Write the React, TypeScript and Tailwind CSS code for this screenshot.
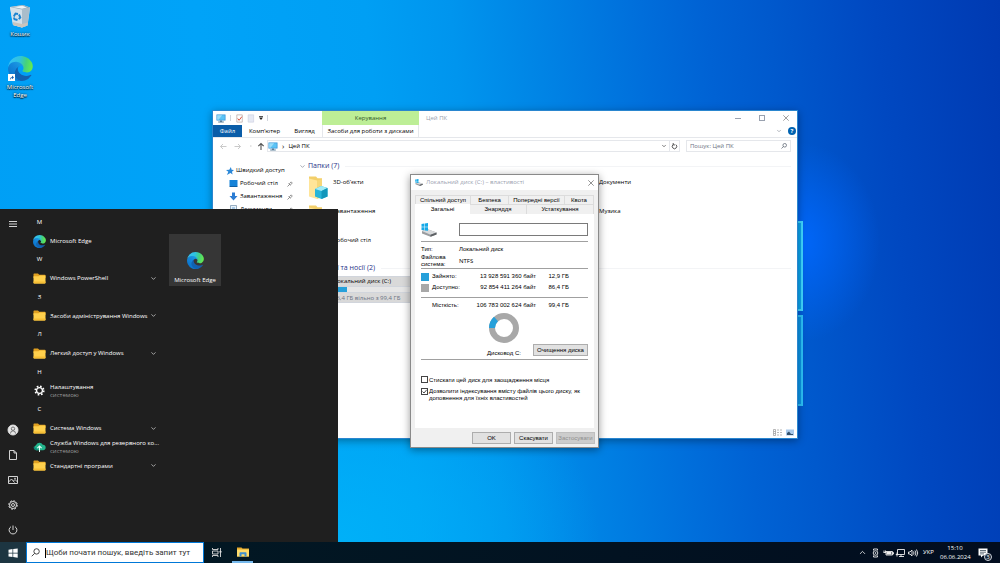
import { ReactNode, useId, useState } from "react";
import { ChevronDown, ChevronUp } from "lucide-react";

const UI_FONT = "font-['Open_Sans','Noto_Sans',sans-serif]";
const DIALOG_FONT = "font-['Liberation_Sans',Arial,sans-serif]";

function EdgeLogo({ className }: { className?: string }) {
  const id = useId();
  return (
    <svg viewBox="0 0 258 259" className={className} aria-hidden="true">
      <defs>
        <linearGradient id={`${id}a`} x1="63" y1="177" x2="241" y2="177" gradientUnits="userSpaceOnUse">
          <stop offset="0" stopColor="#0f62b4" />
          <stop offset="1" stopColor="#1660ab" />
        </linearGradient>
        <linearGradient id={`${id}b`} x1="157" y1="100" x2="46" y2="221" gradientUnits="userSpaceOnUse">
          <stop offset="0" stopColor="#1b9de2" />
          <stop offset="0.4" stopColor="#1588dc" />
          <stop offset="1" stopColor="#0b74cc" />
        </linearGradient>
        <linearGradient id={`${id}c`} x1="20" y1="60" x2="250" y2="110" gradientUnits="userSpaceOnUse">
          <stop offset="0" stopColor="#35c1f1" />
          <stop offset="0.4" stopColor="#2fc3df" />
          <stop offset="0.7" stopColor="#45d27b" />
          <stop offset="1" stopColor="#66eb4e" />
        </linearGradient>
      </defs>
      <path
        fill={`url(#${id}a)`}
        d="M235.68 195.46a93.73 93.73 0 01-10.54 4.71 101.87 101.87 0 01-35.9 6.46c-47.32 0-88.54-32.55-88.54-74.32A31.48 31.48 0 01117.13 105c-42.8 1.8-53.8 46.4-53.8 72.53 0 73.88 68.09 81.37 82.76 81.37 7.91 0 19.84-2.3 27-4.56l1.31-.44a128.34 128.34 0 0066.6-52.8 4 4 0 00-5.32-5.64z"
      />
      <path
        fill={`url(#${id}b)`}
        d="M105.73 246.42A79.2 79.2 0 0183 225.08 80.72 80.72 0 01117.13 105c2.2-1.1 6-3 11.03-2.9a31.5 31.5 0 0125.41 12.8 31.1 31.1 0 016.2 18.2c0-.2 24.5-79.6-80-79.6-43.9 0-80 41.66-80 78.21a130.15 130.15 0 0012.11 56 128 128 0 00156.38 67.11 75.55 75.55 0 01-62.78-10z"
      />
      <path
        fill={`url(#${id}c)`}
        d="M152.33 148.86c-.81 1.05-3.3 2.5-3.3 5.66 0 2.61 1.7 5.12 4.72 7.23 14.38 10 41.49 8.68 41.56 8.68a59.56 59.56 0 0030.27-8.35 61.38 61.38 0 0030.43-52.88c.26-22.41-8-37.31-11.34-43.91-21.19-41.45-66.93-65.29-116.67-65.29a128 128 0 00-128 126.2c.48-36.54 36.8-66.05 80-66.05 3.5 0 23.46.34 42 10.07 16.34 8.58 24.9 18.94 30.85 29.21 6.18 10.67 7.28 24.15 7.28 29.52s-2.74 13.33-7.8 19.91z"
      />
    </svg>
  );
}

function RecycleBin() {
  return (
    <svg viewBox="0 0 22 24" className="h-6 w-[22px]" aria-hidden="true">
      <path d="M1 3l13-2 7 2.500-2.500 18L13 23.500 4 21z" fill="#d6e3ec" />
      <path d="M1 3l12 2.500L13 23.500 4 21z" fill="#d3e0e9" />
      <path d="M13 5.500l8-2-2.500 18L13 23.500z" fill="#a9bdcb" />
      <path d="M1 3l13-2 7 2.500-8 2z" fill="#8fa9b8" />
      <path d="M4 3l9.500-1.200L18 3.500l-5 1.200z" fill="#eef3f6" />
      <path d="M4 18l9 2 5.800-1.500-.4 3L13 23.500 4 21z" fill="#c9c4bd" />
      <g fill="none" stroke="#1c83cf" strokeWidth="1.900">
        <path d="M4.800 12.500l1.700-3 2.500.5" />
        <path d="M10 10.500l1.300 3-1.500 1.600" />
        <path d="M8.500 16l-3-.8-.7-1.700" />
      </g>
    </svg>
  );
}

function MenuFolder() {
  return (
    <svg viewBox="0 0 13 11" className="h-[11px] w-[13px]" aria-hidden="true">
      <path d="M.5 1.200Q.5.500 1.200.500H5l1.200 1.200h5.600q.7 0 .7.700V5H.5z" fill="#e0a021" />
      <path d="M.5 3.200h5L6.500 2.400h6v7.300q0 .8-.8.8H1.300q-.8 0-.8-.8z" fill="#ffd04c" />
      <path d="M.5 8.500h12v1.200q0 .8-.8.8H1.300q-.8 0-.8-.8z" fill="#f6bd35" />
    </svg>
  );
}

function CogIcon() {
  return (
    <svg viewBox="0 0 12 12" className="size-[11px]" aria-hidden="true">
      <circle cx="6" cy="6" r="4.700" fill="none" stroke="#fff" strokeWidth="1.700" strokeDasharray="1.850 1.840" />
      <circle cx="6" cy="6" r="3.200" fill="none" stroke="#fff" strokeWidth="1.400" />
    </svg>
  );
}

function BackupIcon() {
  return (
    <svg viewBox="0 0 14 12" className="h-3 w-[14px]" aria-hidden="true">
      <path d="M3.500 9.500A2.900 2.900 0 013.200 4 4 4 0 0110.500 3.500 3 3 0 0110.800 9.500z" fill="#23b48c" />
      <path d="M3.500 9.500A2.900 2.900 0 011 5.500l5 4z" fill="#0f8a78" />
      <path d="M7 11.500V5M4.700 7.200L7 5l2.300 2.200" fill="none" stroke="#e8fff8" strokeWidth="1.100" />
    </svg>
  );
}

function PcIcon({ className }: { className?: string }) {
  return (
    <svg viewBox="0 0 10 9" className={className} aria-hidden="true">
      <path d="M.5.500h9v6h-9z" fill="#2f8fd6" />
      <path d="M1.200 1.200h7.600v4.600H1.200z" fill="#5cc3f5" />
      <path d="M1.200 1.200h5L2.500 5.800H1.200z" fill="#9adcf9" />
      <path d="M4 6.500h2v1H4zM2.200 7.500h5.600v1H2.200z" fill="#5b7f99" />
    </svg>
  );
}

function DriveIcon({ className }: { className?: string }) {
  return (
    <svg viewBox="0 0 16 14" className={className} aria-hidden="true">
      <path d="M1 8l5-2 9.500 3.500v2l-6 2.300L1 10.500z" fill="#9a9da0" />
      <path d="M1 8l5-2 9.500 3.500-6 2.200z" fill="#d8dadc" />
      <path d="M9.500 11.700l6-2.200v2l-6 2.300z" fill="#5d6164" />
      <path d="M.5 1L3.300.600v3.200H.5zM3.800.500L7 0v3.800H3.800zM.5 4.300h2.800v3L.5 6.900zM3.800 4.300H7v3.500l-3.200-.4z" fill="#15a9e8" />
    </svg>
  );
}

function FolderIcon({ kind }: { kind?: string }) {
  return (
    <svg viewBox="0 0 24 25" className="h-[25px] w-6 shrink-0" aria-hidden="true">
      <path d="M2 1.500h7l1.500 1.800H15V21H2z" fill="#f3cf6a" />
      <path d="M2 3.500l8 2V24l-8-2.500z" fill="#ffe599" />
      <path d="M10 5.500l5-1.200V22L10 24z" fill="#f7d778" />
      {kind === "cube" && (
        <>
          <path d="M8 14l6-3 6.500 2v8.500l-6 2.500L8 21.500z" fill="#29b5d8" />
          <path d="M8 14l6-3 6.500 2-6 3z" fill="#a3ecf5" />
          <path d="M14.500 16l6-3v8.500l-6 2.500z" fill="#1296bb" />
        </>
      )}
    </svg>
  );
}

function SearchGlyph({ className }: { className?: string }) {
  return (
    <svg viewBox="0 0 10 10" className={className} fill="none" stroke="currentColor" aria-hidden="true">
      <circle cx="6.200" cy="3.800" r="3" />
      <path d="M4 6L.8 9.200" />
    </svg>
  );
}

function DesktopIcon({ label, children }: { label: string; children: ReactNode }) {
  return (
    <button className="flex w-[38px] flex-col items-center gap-[2px] text-center text-[6px] leading-[8px] text-white [text-shadow:0_1px_1px_#000,0_0_2px_#000]">
      <span className="relative">{children}</span>
      {label}
    </button>
  );
}

type MenuRow = { letter?: string; label?: string; icon?: "edge" | "folder" | "cog" | "backup"; note?: string };

const MENU_ROWS: MenuRow[] = [
  { letter: "M" },
  { label: "Microsoft Edge", icon: "edge" },
  { letter: "W" },
  { label: "Windows PowerShell", icon: "folder" },
  { letter: "З" },
  { label: "Засоби адміністрування Windows", icon: "folder" },
  { letter: "Л" },
  { label: "Легкий доступ у Windows", icon: "folder" },
  { letter: "Н" },
  { label: "Налаштування", icon: "cog", note: "системою" },
  { letter: "С" },
  { label: "Система Windows", icon: "folder" },
  { label: "Служба Windows для резервного ко...", icon: "backup", note: "системою" },
  { label: "Стандартні програми", icon: "folder" },
];

function MenuIcon({ icon }: { icon: MenuRow["icon"] }) {
  if (icon === "edge") return <EdgeLogo className="size-[13px]" />;
  if (icon === "cog") return <CogIcon />;
  if (icon === "backup") return <BackupIcon />;
  return <MenuFolder />;
}

function RailButton({ label, children }: { label: string; children: ReactNode }) {
  return (
    <button aria-label={label} className="flex h-[25px] w-full items-center justify-center">
      <svg viewBox="0 0 12 12" className="size-3" fill="none" stroke="#e6e6e6" strokeWidth="0.900">
        {children}
      </svg>
    </button>
  );
}

function StartMenu() {
  return (
    <div className="absolute bottom-0 left-0 z-30 flex h-[333px] w-[338px] bg-[#1f1f1f] text-[6px] text-white">
      <nav className="flex w-[26px] flex-col pt-[2px]">
        <RailButton label="Меню">
          <path d="M2 3.500h8M2 6h8M2 8.500h8" />
        </RailButton>
        <div className="flex-1" />
        <RailButton label="Користувач">
          <circle cx="6" cy="6" r="5" fill="#e4e4e4" />
          <circle cx="6" cy="4.700" r="1.700" stroke="#666" />
          <path d="M3.500 9.500Q3.500 6.800 6 6.800T8.500 9.500" stroke="#666" />
        </RailButton>
        <RailButton label="Документи">
          <path d="M2.500 1.500h4.500L9.500 4v6.500h-7zM7 1.500V4h2.500" />
        </RailButton>
        <RailButton label="Зображення">
          <path d="M1.500 2.500h9v7h-9zM1.500 8L4.500 5l3 3.500M6.500 7l1.500-1.500 2.500 2.500" />
          <circle cx="8" cy="4.300" r=".4" />
        </RailButton>
        <RailButton label="Параметри">
          <circle cx="6" cy="6" r="4.300" strokeDasharray="1.900 1.470" />
          <circle cx="6" cy="6" r="3.500" />
          <circle cx="6" cy="6" r="1.500" />
        </RailButton>
        <RailButton label="Живлення">
          <path d="M6 1.500V6M4 2.700a3.900 3.900 0 104 0" />
        </RailButton>
      </nav>

      <ul className="mt-1 grid h-[262px] w-[132px] auto-rows-fr pl-[7px]">
        {MENU_ROWS.map((row) => (
          <li key={row.letter ?? row.label} className="flex items-center">
            {row.letter ? (
              <span className="w-[13px] text-center">{row.letter}</span>
            ) : (
              <button className="flex w-full items-center text-left">
                <span className="flex w-[13px] shrink-0 justify-center">
                  <MenuIcon icon={row.icon} />
                </span>
                <span className="ml-1 flex-1 leading-[8px] whitespace-nowrap">
                  {row.label}
                  {row.note && <span className="block text-[#9a9a9a]">{row.note}</span>}
                </span>
                {row.icon === "folder" && <ChevronDown className="mr-[2px] size-[7px]" strokeWidth={2} />}
              </button>
            )}
          </li>
        ))}
      </ul>

      <button className="mt-[25px] ml-[11px] flex h-[52px] w-[52px] flex-col items-center justify-end bg-[#363636] pb-[2px]">
        <EdgeLogo className="mb-[7px] size-[17px]" />
        <span className="leading-[8px] whitespace-nowrap">Microsoft Edge</span>
      </button>
    </div>
  );
}

function SidebarLink({ label, pinned = true, children }: { label: string; pinned?: boolean; children: ReactNode }) {
  return (
    <a href="#" className={`flex h-[13px] items-center ${pinned ? "pl-[3px]" : ""}`}>
      <svg viewBox="0 0 9 9" className={pinned ? "mr-[2px] size-[9px]" : "mr-[2px] size-2"} aria-hidden="true">
        {children}
      </svg>
      <span className="flex-1 whitespace-nowrap">{label}</span>
      {pinned && (
        <svg viewBox="0 0 6 6" className="size-[6px]" stroke="#777" fill="none" strokeWidth="0.800" aria-hidden="true">
          <path d="M.5 5.500L2.500 3.500M1.500 2.500l2 2M2.200 2.800L4.200.900 5.300 2 3.300 4" />
        </svg>
      )}
    </a>
  );
}

function FolderTile({ label, className, kind }: { label: string; className?: string; kind?: string }) {
  return (
    <button className={`flex h-[29px] items-start gap-[2px] pl-2 text-left ${className ?? ""}`}>
      <FolderIcon kind={kind} />
      <span className="mt-[3px]">{label}</span>
    </button>
  );
}

function SectionHeading({ children }: { children: ReactNode }) {
  return (
    <h2 className="flex items-center gap-[2px] text-[7px] leading-[10px] text-[#1e3287]">
      <ChevronDown className="size-[7px] text-gray-500" />
      {children}
      <span className="ml-1 h-px flex-1 bg-gray-100" />
    </h2>
  );
}

function ExplorerWindow() {
  return (
    <section className="absolute top-[110px] left-[212px] z-10 flex h-[329px] w-[586px] flex-col border border-[#2a86cf] bg-white text-[6px] text-black shadow-[0_2px_8px_rgba(0,0,0,0.35)]">
      <header className="flex h-[14px] items-stretch">
        <div className="flex w-[109px] items-center gap-1 pl-[3px]">
          <PcIcon className="h-[9px] w-[10px]" />
          <span className="h-[6px] w-px bg-gray-300" />
          <svg viewBox="0 0 22 9" className="h-[9px] w-[20px]" fill="none" aria-hidden="true">
            <path d="M2 .500h6v8H2z" fill="#fff" stroke="#b9a8a4" strokeWidth=".8" />
            <path d="M3 4.500L4.500 6.500 7.500 2.500" stroke="#d8432e" />
            <path d="M14.500.500h6v8h-6z" fill="#e6e9f4" stroke="#cfd3e2" strokeWidth=".8" />
          </svg>
          <svg viewBox="0 0 5 5" className="size-1" fill="#222" aria-hidden="true">
            <path d="M0 0h5v1H0zM0 2h5L2.500 5z" />
          </svg>
          <span className="h-[6px] w-px bg-gray-300" />
        </div>
        <div className="flex w-[97px] items-center justify-center bg-[#bdee96] text-[#33592a]">Керування</div>
        <span className="flex flex-1 items-center pl-[7px] text-gray-400">Цей ПК</span>
        <div className="flex items-center gap-[18px] pr-[8px]">
          <button aria-label="Згорнути" className="h-px w-[6px] bg-gray-400" />
          <button aria-label="Розгорнути" className="size-[6px] border border-gray-400" />
          <button aria-label="Закрити">
            <svg viewBox="0 0 6 6" className="size-[6px]" stroke="#888" strokeWidth="0.800">
              <path d="M.3.300l5.400 5.400M5.700.300L.3 5.700" />
            </svg>
          </button>
        </div>
      </header>

      <div className="flex h-[13px] items-stretch border-b border-gray-200">
        <button className="w-[29px] bg-[#0a5da8] text-white">Файл</button>
        <button className="w-[45px]">Комп’ютер</button>
        <button className="w-[35px]">Вигляд</button>
        <button className="w-[97px] border-x border-gray-200 whitespace-nowrap">Засоби для роботи з дисками</button>
        <div className="flex flex-1 items-center justify-end gap-[6px] pr-[1px]">
          <ChevronDown className="size-[6px] text-gray-500" />
          <button className="size-[8px] rounded-full bg-[#0063b1] text-[6px] leading-[8px] font-bold text-white">?</button>
        </div>
      </div>

      <div className="mt-px flex h-[14px] items-center pr-[6px]">
        <svg viewBox="0 0 54 9" className="h-[9px] w-[54px]" fill="none" stroke="#c4c4c4" strokeWidth="0.900" aria-hidden="true">
          <path d="M13.500 4.500h-6M10 2L7.500 4.500 10 7M21.500 4.500h6M25 2l2.500 2.500L25 7M37 4h1.500" />
          <path d="M48 8V1.500M45.300 4.200L48 1.500l2.700 2.700" stroke="#555" strokeWidth="1.100" />
        </svg>
        <div className="flex h-[12px] flex-1 items-center border border-gray-200">
          <PcIcon className="h-[9px] w-[10px]" />
          <span className="mx-1 text-[8px] leading-[8px]">›</span>
          <span className="flex-1">Цей ПК</span>
          <ChevronDown className="mr-[2px] size-[6px]" />
          <span className="h-full w-px bg-gray-200" />
          <svg viewBox="0 0 8 8" className="mx-[1px] size-[7px]" fill="none" stroke="#444" aria-hidden="true">
            <path d="M5.500 1.800A2.600 2.600 0 112.500 1.800M2.500 0v2.200h2" />
          </svg>
        </div>
        <label className="ml-[6px] flex h-[12px] w-[105px] items-center border border-gray-200 px-[3px]">
          <input aria-label="Пошук" placeholder="Пошук: Цей ПК" className="min-w-0 flex-1 outline-none placeholder:text-gray-500" />
          <SearchGlyph className="size-[6px] text-gray-700" />
        </label>
      </div>

      <div className="flex flex-1 overflow-hidden">
        <aside className="w-[86px] pt-[11px] pr-[6px] pl-[13px]">
          <SidebarLink label="Швидкий доступ" pinned={false}>
            <path d="M5.500 0l.8 3 2.700.5-2.300 1.800.8 3.200L5 6.800 1 9l1.600-3.700L0 3.500 3.700 3z" fill="#2b88d8" />
          </SidebarLink>
          <SidebarLink label="Робочий стіл">
            <path d="M.5 1h8v6h-8z" fill="#1583d8" />
            <path d="M.5 7h8v1h-8z" fill="#0d5fa3" />
          </SidebarLink>
          <SidebarLink label="Завантаження">
            <path d="M3 .500h3V4h2.500l-4 4.500L.5 4H3z" fill="#2b7cd3" />
          </SidebarLink>
          <SidebarLink label="Документи">
            <path d="M1.500.500h6v8h-6z" fill="#e9f2fa" stroke="#6f8ea8" strokeWidth=".7" />
            <path d="M3 3h3M3 5h3" stroke="#4a90c8" strokeWidth=".8" />
          </SidebarLink>
        </aside>
        <div className="flex-1 pt-2 pr-[6px]">
          <SectionHeading>Папки (7)</SectionHeading>
          <div className="grid auto-rows-[29px] grid-cols-[133px_133px_133px] pt-1">
            <FolderTile label="3D-об’єкти" kind="cube" />
            <FolderTile label="Документи" className="col-start-3" />
            <FolderTile label="Завантаження" className="col-start-1" />
            <FolderTile label="Музика" className="col-start-3" />
            <FolderTile label="Робочий стіл" className="col-start-1" />
          </div>
          <div className="mt-px">
            <SectionHeading>Пристрої та носії (2)</SectionHeading>
          </div>
          <button className="mt-[3px] flex w-[139px] gap-[2px] border border-gray-300 bg-[#d9d9d9] pl-2 text-left leading-[8px]">
            <DriveIcon className="mt-1 h-5 w-[23px]" />
            <span className="flex-1">
              <span className="block">Локальний диск (C:)</span>
              <span className="my-[1px] block h-[7px] w-[100px] border border-gray-300 bg-[#e6e6e6]">
                <span className="block h-full w-[13%] bg-[#26a0da]" />
              </span>
              <span className="block text-gray-500">86,4 ГБ вільно з 99,4 ГБ</span>
            </span>
          </button>
        </div>
      </div>

      <footer className="flex h-[12px] items-center justify-end gap-1 pr-[3px]">
        <svg viewBox="0 0 9 7" className="h-[7px] w-[9px]" stroke="#999" strokeWidth=".7" fill="none" aria-hidden="true">
          <path d="M.5.500h2v6h-2zM.5 2.500h2M.5 4.500h2M4 1h2M7 1h2M4 3.500h2M7 3.500h2M4 6h2M7 6h2" />
        </svg>
        <svg viewBox="0 0 8 7" className="h-[7px] w-2" aria-hidden="true">
          <path d="M0 .500h8v6H0z" fill="#a9c9ea" />
          <path d="M1 4l2-1.500 2 2.500h2v1H1z" fill="#33506b" />
        </svg>
      </footer>
    </section>
  );
}

function Rule() {
  return <hr className="border-[#a0a0a0]" />;
}

function DialogButton({ children, disabled }: { children: ReactNode; disabled?: boolean }) {
  return (
    <button
      disabled={disabled}
      className="h-3 w-[39px] border border-[#adadad] bg-[#e1e1e1] leading-[10px] disabled:border-[#bfbfbf] disabled:bg-[#cccccc] disabled:text-[#8f8f8f]"
    >
      {children}
    </button>
  );
}

function PropertiesDialog() {
  const [compress, setCompress] = useState(false);
  const [indexing, setIndexing] = useState(true);
  const tab = "border-t border-r border-[#dcdcdc] bg-[#f0f0f0] text-center leading-[9px]";
  const box = "size-[7px] shrink-0 appearance-none border border-[#444] bg-white";

  return (
    <section className={`absolute top-[174px] left-[410px] z-20 flex h-[274px] w-[189px] flex-col border border-[#8a8a8a] bg-[#f0f0f0] text-[6px] text-black shadow-[0_2px_8px_rgba(0,0,0,0.4)] ${DIALOG_FONT}`}>
      <header className={`flex h-[15px] items-center bg-white px-1 text-gray-400 ${UI_FONT}`}>
        <DriveIcon className="mr-[3px] h-[7px] w-2" />
        <h1 className="flex-1">Локальний диск (C:) – властивості</h1>
        <button aria-label="Закрити">
          <svg viewBox="0 0 6 6" className="size-[6px]" stroke="#777" strokeWidth="0.800">
            <path d="M.3.300l5.400 5.400M5.700.300L.3 5.700" />
          </svg>
        </button>
      </header>

      <div className="flex flex-1 flex-col px-1 pt-[5px]">
        <div className="flex h-[9px] border-l border-[#dcdcdc]">
          <button className={`w-[55px] ${tab}`}>Спільний доступ</button>
          <button className={`w-[38px] ${tab}`}>Безпека</button>
          <button className={`w-[56px] ${tab}`}>Попередні версії</button>
          <button className={`flex-1 ${tab}`}>Квота</button>
        </div>
        <div className="flex h-[10px]">
          <button className="w-[55px] bg-white leading-[9px]">Загальні</button>
          <button className={`w-[57px] ${tab}`}>Знаряддя</button>
          <button className={`flex-1 ${tab}`}>Устаткування</button>
        </div>

        <div className="flex flex-1 flex-col bg-white px-[6px] pt-[9px]">
          <div className="flex h-[18px] items-start justify-between">
            <DriveIcon className="h-[14px] w-4" />
            <input aria-label="Мітка тому" className="h-[13px] w-[129px] border border-[#7a7a7a] bg-white px-1 outline-none" />
          </div>
          <Rule />
          <dl className="grid grid-cols-[38px_1fr] items-center pt-[4px] leading-[7px]">
            <dt className="pb-[1px]">Тип:</dt>
            <dd className="pb-[1px]">Локальний диск</dd>
            <dt>
              Файлова
              <br />
              система:
            </dt>
            <dd className={UI_FONT}>NTFS</dd>
          </dl>
          <Rule />
          <table className="mt-[2px] w-[148px] text-right">
            <tbody>
              <tr className="h-[11px]">
                <td className="w-[11px]">
                  <span className="block size-2 bg-[#26a0da]" />
                </td>
                <th scope="row" className="text-left font-normal">Зайнято:</th>
                <td>13 928 591 360 байт</td>
                <td className="w-[33px]">12,9 ГБ</td>
              </tr>
              <tr className="h-[11px]">
                <td>
                  <span className="block size-2 bg-[#a8a8a8]" />
                </td>
                <th scope="row" className="text-left font-normal">Доступно:</th>
                <td>92 854 411 264 байт</td>
                <td>86,4 ГБ</td>
              </tr>
            </tbody>
          </table>
          <div className="mt-[4px]">
            <Rule />
          </div>
          <div className="mt-[3px] flex h-[9px] w-[148px] items-center pl-[11px]">
            <span className="flex-1">Місткість:</span>
            <span>106 783 002 624 байт</span>
            <span className="w-[33px] text-right">99,4 ГБ</span>
          </div>
          <div className="mt-[3px] flex h-[46px] items-end">
            <div className="w-[66px]" />
            <div className="flex h-full flex-col items-center justify-between pb-[2px] whitespace-nowrap">
              <svg viewBox="0 0 30 30" className="size-[30px]" fill="none" strokeWidth="6" aria-hidden="true">
                <circle cx="15" cy="15" r="12" stroke="#a8a8a8" />
                <path d="M3 15A12 12 0 017 6.050" stroke="#26a0da" />
              </svg>
              <span className="leading-[8px]">Дисковод C:</span>
            </div>
            <button className="mb-[3px] ml-auto h-3 w-[55px] border border-[#adadad] bg-[#e1e1e1] leading-[10px] whitespace-nowrap">
              Очищення диска
            </button>
          </div>
          <Rule />
          <label className="mt-4 flex h-3 gap-[1px] leading-[8px]">
            <input type="checkbox" className={box} checked={compress} onChange={(e) => setCompress(e.target.checked)} />
            Стискати цей диск для заощадження місця
          </label>
          <label className="flex gap-[1px] leading-[7px]">
            <span className="relative flex">
              <input type="checkbox" className={box} checked={indexing} onChange={(e) => setIndexing(e.target.checked)} />
              {indexing && (
                <svg viewBox="0 0 7 7" className="pointer-events-none absolute top-0 left-0 size-[7px]" fill="none" stroke="#222" strokeWidth=".8" aria-hidden="true">
                  <path d="M1.500 3.500L3 5l2.700-3.200" />
                </svg>
              )}
            </span>
            <span>
              Дозволити індексування вмісту файлів цього диску, як доповнення для їхніх властивостей
            </span>
          </label>
        </div>
      </div>

      <footer className="flex h-[19px] items-center justify-end gap-[3px] pr-[3px]">
        <DialogButton>OK</DialogButton>
        <DialogButton>Скасувати</DialogButton>
        <DialogButton disabled>Застосувати</DialogButton>
      </footer>
    </section>
  );
}

function Taskbar() {
  return (
    <footer className="z-40 flex h-[21px] items-stretch bg-linear-to-r from-[#021a24] to-[#020d1f] text-[6px] text-white">
      <button aria-label="Пуск" className="flex w-[26px] items-center justify-center bg-[#1d3541]">
        <svg viewBox="0 0 10 10" className="size-[10px]" fill="#fff">
          <path d="M.5 1.700L4.500 1.100v3.600h-4zM5.200 1L9.700.400v4.300H5.200zM.5 5.400h4V9l-4-.6zM5.200 5.400h4.500v4.300L5.200 9.100z" />
        </svg>
      </button>
      <label className="flex w-[178px] items-center border border-[#0078d7] bg-white pl-1 font-['Roboto',sans-serif] text-[8px] text-[#333]">
        <SearchGlyph className="mr-[5px] size-[9px]" />
        <span className="h-[10px] w-px bg-black" />
        <input aria-label="Пошук" placeholder="Щоби почати пошук, введіть запит тут" className="min-w-0 flex-1 outline-none placeholder:text-[#333]" />
      </label>
      <button aria-label="Подання завдань" className="flex w-[25px] items-center justify-center">
        <svg viewBox="0 0 10 9" className="h-[9px] w-[10px]" fill="none" stroke="#ddd" strokeWidth="0.900">
          <path d="M.5 0v1.500h5.500V0M.5 9V7.500h5.500V9M.5 3h5.500v3H.5zM8.500 0v9" />
          <path d="M7.500 3h2v1.500h-2z" fill="#ddd" stroke="none" />
        </svg>
      </button>
      <button aria-label="Провідник" className="ml-[3px] flex w-[21px] items-center justify-center border-b-2 border-[#76b9ed]">
        <svg viewBox="0 0 12 10" className="h-[10px] w-3">
          <path d="M0 .500h4.500l1 1H12V9.500H0z" fill="#e8a92b" />
          <path d="M0 2.500h12v7H0z" fill="#ffdc6b" />
          <path d="M2.500 9.500V6q0-.7.700-.7h5.600q.7 0 .7.700v3.500h-2V7.300h-3v2.200z" fill="#3e8fd0" />
        </svg>
      </button>
      <div className="flex-1" />
      <div className="flex items-center gap-[3px]">
        <ChevronUp className="mr-[1px] size-[9px]" />
        <svg viewBox="0 0 49 10" className="h-[10px] w-[49px]" fill="none" stroke="#eee" strokeWidth="0.900" aria-hidden="true">
          <path d="M2.500 2.500V1h4v1.500M2.500 7.500V9h4V7.500" />
          <circle cx="4.500" cy="5" r="2.300" />
          <circle cx="4.500" cy="5" r=".5" />
          <path d="M15 3.500h6.500v3.500H15zM21.500 4.500h1v1.500h-1M13 2.500v2M14.500 2.500v2M12.500 4.500h2.500" />
          <path d="M15.500 4h5v2.500h-5z" fill="#eee" stroke="none" />
          <path d="M26.500 1.500h7v5h-7zM30 6.500v2M28 8.500h5M26 4.500v4M24.800 6.500h2.400" />
          <path d="M37.500 4h1.500l2-2v6l-2-2h-1.500zM42.500 3.500q1 1.500 0 3M44 2.500q1.800 2.500 0 5M45.500 1.500q2.500 3.500 0 7" />
        </svg>
        <span className="w-[14px]">УКР</span>
      </div>
      <time className="mr-2 ml-[3px] flex w-[30px] flex-col justify-center text-center leading-[9px]">
        <span>15:10</span>
        <span>06.06.2024</span>
      </time>
      <button aria-label="Сповіщення" className="relative mr-[8px] flex w-[14px] items-center">
        <svg viewBox="0 0 10 10" className="size-[10px]" fill="#fff">
          <path d="M.5.500h9v7H5L3 9.500v-2H.5z" />
          <path d="M2 2.500h6M2 4.200h6M2 5.900h4" stroke="#234" strokeWidth=".7" />
        </svg>
        <span className="absolute right-0 bottom-[2px] size-2 rounded-full border border-gray-300 bg-[#142233] text-[6px] leading-[6px]">3</span>
      </button>
    </footer>
  );
}

export default function App() {
  return (
    <div
      className={`flex min-h-screen flex-col overflow-hidden ${UI_FONT} bg-[radial-gradient(ellipse_80px_100px_at_80%_43%,#0068ffe6_0%,#0068ff00_100%),radial-gradient(ellipse_260px_200px_at_34%_96%,#00b4f8cc_0%,#00b4f800_100%),linear-gradient(84deg,#009ff5_0%,#00a3f8_24%,#009ff4_40%,#0095ee_48%,#0086e6_55%,#0079e0_61%,#006edb_66%,#0062d4_72%,#0059cd_78%,#0048c1_88%,#003ab2_100%)]`}
    >
      <main className="relative flex-1">
        <div className="flex flex-col gap-[18px] pt-1 pl-[1px]">
          <DesktopIcon label="Кошик">
            <RecycleBin />
          </DesktopIcon>
          <DesktopIcon label="Microsoft Edge">
            <EdgeLogo className="size-[25px]" />
            <svg viewBox="0 0 7 7" className="absolute bottom-0 left-0 size-[7px]" aria-hidden="true">
              <path d="M0 0h7v7H0z" fill="#fff" />
              <path d="M2 6Q1.500 3.500 4 3V1.500L6 3.500 4 5.300V4Q2.500 4.200 2 6z" fill="#1a5fb0" />
            </svg>
          </DesktopIcon>
        </div>

        {/* glowing right edge of the wallpaper's window */}
        <div className="absolute top-[221px] left-[796px] flex flex-col gap-1">
          <span className="h-[90px] w-[7px] border-2 border-[#3fd5ff] bg-[#0aa5ee]" />
          <span className="h-[91px] w-[7px] border-2 border-[#2cc0f8] bg-[#0a94e6]" />
        </div>

        <ExplorerWindow />
        <PropertiesDialog />
        <StartMenu />
      </main>
      <Taskbar />
    </div>
  );
}
